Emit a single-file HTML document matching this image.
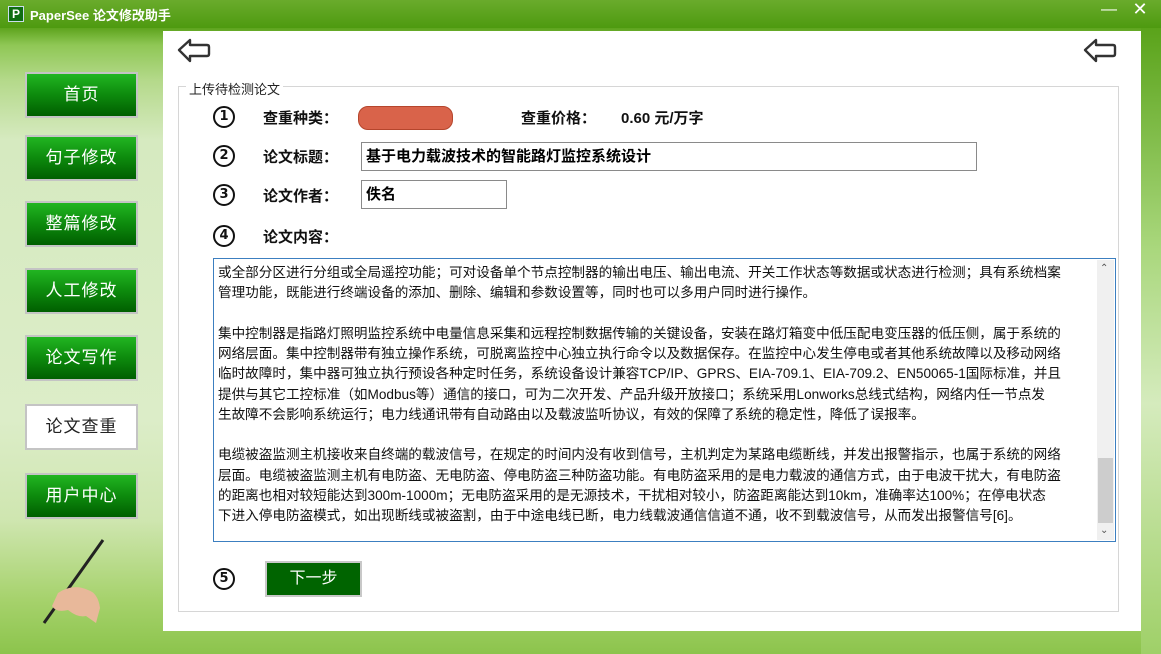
<!DOCTYPE html>
<html><head><meta charset="utf-8"><style>
*{margin:0;padding:0;box-sizing:border-box}
body{width:1161px;height:654px;overflow:hidden;position:relative;font-family:"Liberation Sans","Noto Sans CJK SC",sans-serif;
background:linear-gradient(180deg,#4f9a12 0px,#5ea41e 28px,#8fc755 45px,#b4d98a 80px,#d6eac0 140px,#dcedc8 420px,#cfe6b0 520px,#a6d26c 600px,#8cc44c 654px);}
.title{position:absolute;left:0;top:0;width:1161px;height:28px;background:linear-gradient(180deg,#6aab2c,#4e9a10);}
.logo{position:absolute;left:8px;top:6px;width:16px;height:16px;background:#0f6d12;border:1px solid #cde;color:#fff;font:bold 12px "Liberation Sans";text-align:center;line-height:14px}
.tt{position:absolute;left:30px;top:5px;color:#fff;font-weight:bold;font-size:13px}
.wb{position:absolute;top:0;width:28px;height:20px;color:#fff;text-align:center;font-size:16px;line-height:20px}
.panel{position:absolute;left:163px;top:31px;width:978px;height:600px;background:#fff}
.nav{position:absolute;left:25px;width:113px;height:46px;border:2px solid #c4c4c4;background:linear-gradient(180deg,#22b522,#0d8a0d 50%,#005f00);color:#fff;font-size:17px;text-align:center;line-height:42px;letter-spacing:1px}
.nav.w{background:#fff;color:#222}
.fs{position:absolute;left:178px;top:86px;width:941px;height:526px;border:1px solid #d6d6d6}
.lg{position:absolute;left:186px;top:79px;background:#fff;padding:0 3px;font-size:13px;color:#222}
.n{position:absolute;left:213px;width:22px;height:22px;border:2.5px solid #111;border-radius:50%;font:bold 13px/17px "DejaVu Sans",sans-serif;text-align:center;color:#111}
.lb{position:absolute;left:263px;font-size:15px;font-weight:bold;color:#111}
.inp{position:absolute;border:1px solid #8a8a8a;background:#fff;font-size:15px;font-weight:bold;padding-left:4px;line-height:27px}
.ta{position:absolute;left:213px;top:258px;width:903px;height:284px;border:1px solid #3c7fc0;background:#fff;overflow:hidden}
.txt{position:absolute;left:4px;top:4px;font-size:13.6px;line-height:20.25px;color:#111;white-space:nowrap}
.sb{position:absolute;right:1px;top:1px;width:17px;height:280px;background:#f0f0f0}
.thumb{position:absolute;left:1px;top:198px;width:15px;height:65px;background:#cdcdcd}
.btn{position:absolute;left:265px;top:561px;width:97px;height:36px;border:2px solid #c8c8c8;background:#006400;color:#fff;font-size:16px;text-align:center;line-height:32px}
</style></head><body>
<div class="title"></div>
<div class="logo">P</div>
<div class="tt">PaperSee 论文修改助手</div>
<div class="wb" style="left:1095px;top:0">&#8212;</div>
<div class="wb" style="left:1126px;top:-1px;font-size:18px">✕</div>
<div style="position:absolute;left:1141px;top:28px;width:20px;height:626px;background:linear-gradient(180deg,#5aa31a,#a9d77c 35%,#d5ebbd 60%,#9fd068)"></div>
<div class="panel"></div>
<svg style="position:absolute;left:177px;top:38px" width="34" height="26" viewBox="0 0 34 26"><path d="M2 12 L13 2 L13 7 L30 7 Q32 7 32 9 L32 16 Q32 18 30 18 L13 18 L13 23 Z" fill="none" stroke="#333" stroke-width="2.4" stroke-linejoin="round"/></svg>
<svg style="position:absolute;left:1083px;top:38px" width="34" height="26" viewBox="0 0 34 26"><path d="M2 12 L13 2 L13 7 L30 7 Q32 7 32 9 L32 16 Q32 18 30 18 L13 18 L13 23 Z" fill="none" stroke="#333" stroke-width="2.4" stroke-linejoin="round"/></svg>
<div class="nav" style="top:72px">首页</div>
<div class="nav" style="top:135px">句子修改</div>
<div class="nav" style="top:201px">整篇修改</div>
<div class="nav" style="top:268px">人工修改</div>
<div class="nav" style="top:335px">论文写作</div>
<div class="nav w" style="top:404px">论文查重</div>
<div class="nav" style="top:473px">用户中心</div>
<svg style="position:absolute;left:38px;top:538px" width="70" height="90" viewBox="0 0 70 90"><line x1="65" y1="2" x2="6" y2="85" stroke="#222" stroke-width="3"/><path d="M20 55 Q35 45 50 52 Q60 55 62 70 L58 85 L48 78 Q40 80 30 72 Q18 75 14 68 Z" fill="#e8b89a"/></svg>
<div class="fs"></div>
<div class="lg">上传待检测论文</div>
<div class="n" style="top:106px">1</div>
<div class="lb" style="top:107px">查重种类：</div>
<div style="position:absolute;left:358px;top:106px;width:95px;height:24px;border-radius:10px;background:#d9634a;border:1px solid #b5452c"></div>
<div class="lb" style="left:521px;top:107px">查重价格：</div>
<div class="lb" style="left:621px;top:107px">0.60 元/万字</div>
<div class="n" style="top:145px">2</div>
<div class="lb" style="top:146px">论文标题：</div>
<div class="inp" style="left:361px;top:142px;width:616px;height:29px">基于电力载波技术的智能路灯监控系统设计</div>
<div class="n" style="top:184px">3</div>
<div class="lb" style="top:185px">论文作者：</div>
<div class="inp" style="left:361px;top:180px;width:146px;height:29px">佚名</div>
<div class="n" style="top:225px">4</div>
<div class="lb" style="top:226px">论文内容：</div>
<div class="ta"><div class="txt">或全部分区进行分组或全局遥控功能；可对设备单个节点控制器的输出电压、输出电流、开关工作状态等数据或状态进行检测；具有系统档案<br>管理功能，既能进行终端设备的添加、删除、编辑和参数设置等，同时也可以多用户同时进行操作。<br>&nbsp;<br>集中控制器是指路灯照明监控系统中电量信息采集和远程控制数据传输的关键设备，安装在路灯箱变中低压配电变压器的低压侧，属于系统的<br>网络层面。集中控制器带有独立操作系统，可脱离监控中心独立执行命令以及数据保存。在监控中心发生停电或者其他系统故障以及移动网络<br>临时故障时，集中器可独立执行预设各种定时任务，系统设备设计兼容TCP/IP、GPRS、EIA-709.1、EIA-709.2、EN50065-1国际标准，并且<br>提供与其它工控标准（如Modbus等）通信的接口，可为二次开发、产品升级开放接口；系统采用Lonworks总线式结构，网络内任一节点发<br>生故障不会影响系统运行；电力线通讯带有自动路由以及载波监听协议，有效的保障了系统的稳定性，降低了误报率。<br>&nbsp;<br>电缆被盗监测主机接收来自终端的载波信号，在规定的时间内没有收到信号，主机判定为某路电缆断线，并发出报警指示，也属于系统的网络<br>层面。电缆被盗监测主机有电防盗、无电防盗、停电防盗三种防盗功能。有电防盗采用的是电力载波的通信方式，由于电波干扰大，有电防盗<br>的距离也相对较短能达到300m-1000m；无电防盗采用的是无源技术，干扰相对较小，防盗距离能达到10km，准确率达100%；在停电状态<br>下进入停电防盗模式，如出现断线或被盗割，由于中途电线已断，电力线载波通信信道不通，收不到载波信号，从而发出报警信号[6]。</div>
<div class="sb"><div style="position:absolute;top:3px;left:3px;font-size:10px;color:#555">&#8963;</div><div class="thumb"></div><div style="position:absolute;bottom:4px;left:3px;font-size:10px;color:#555">&#8964;</div></div></div>
<div class="n" style="top:568px">5</div>
<div class="btn">下一步</div>
</body></html>
